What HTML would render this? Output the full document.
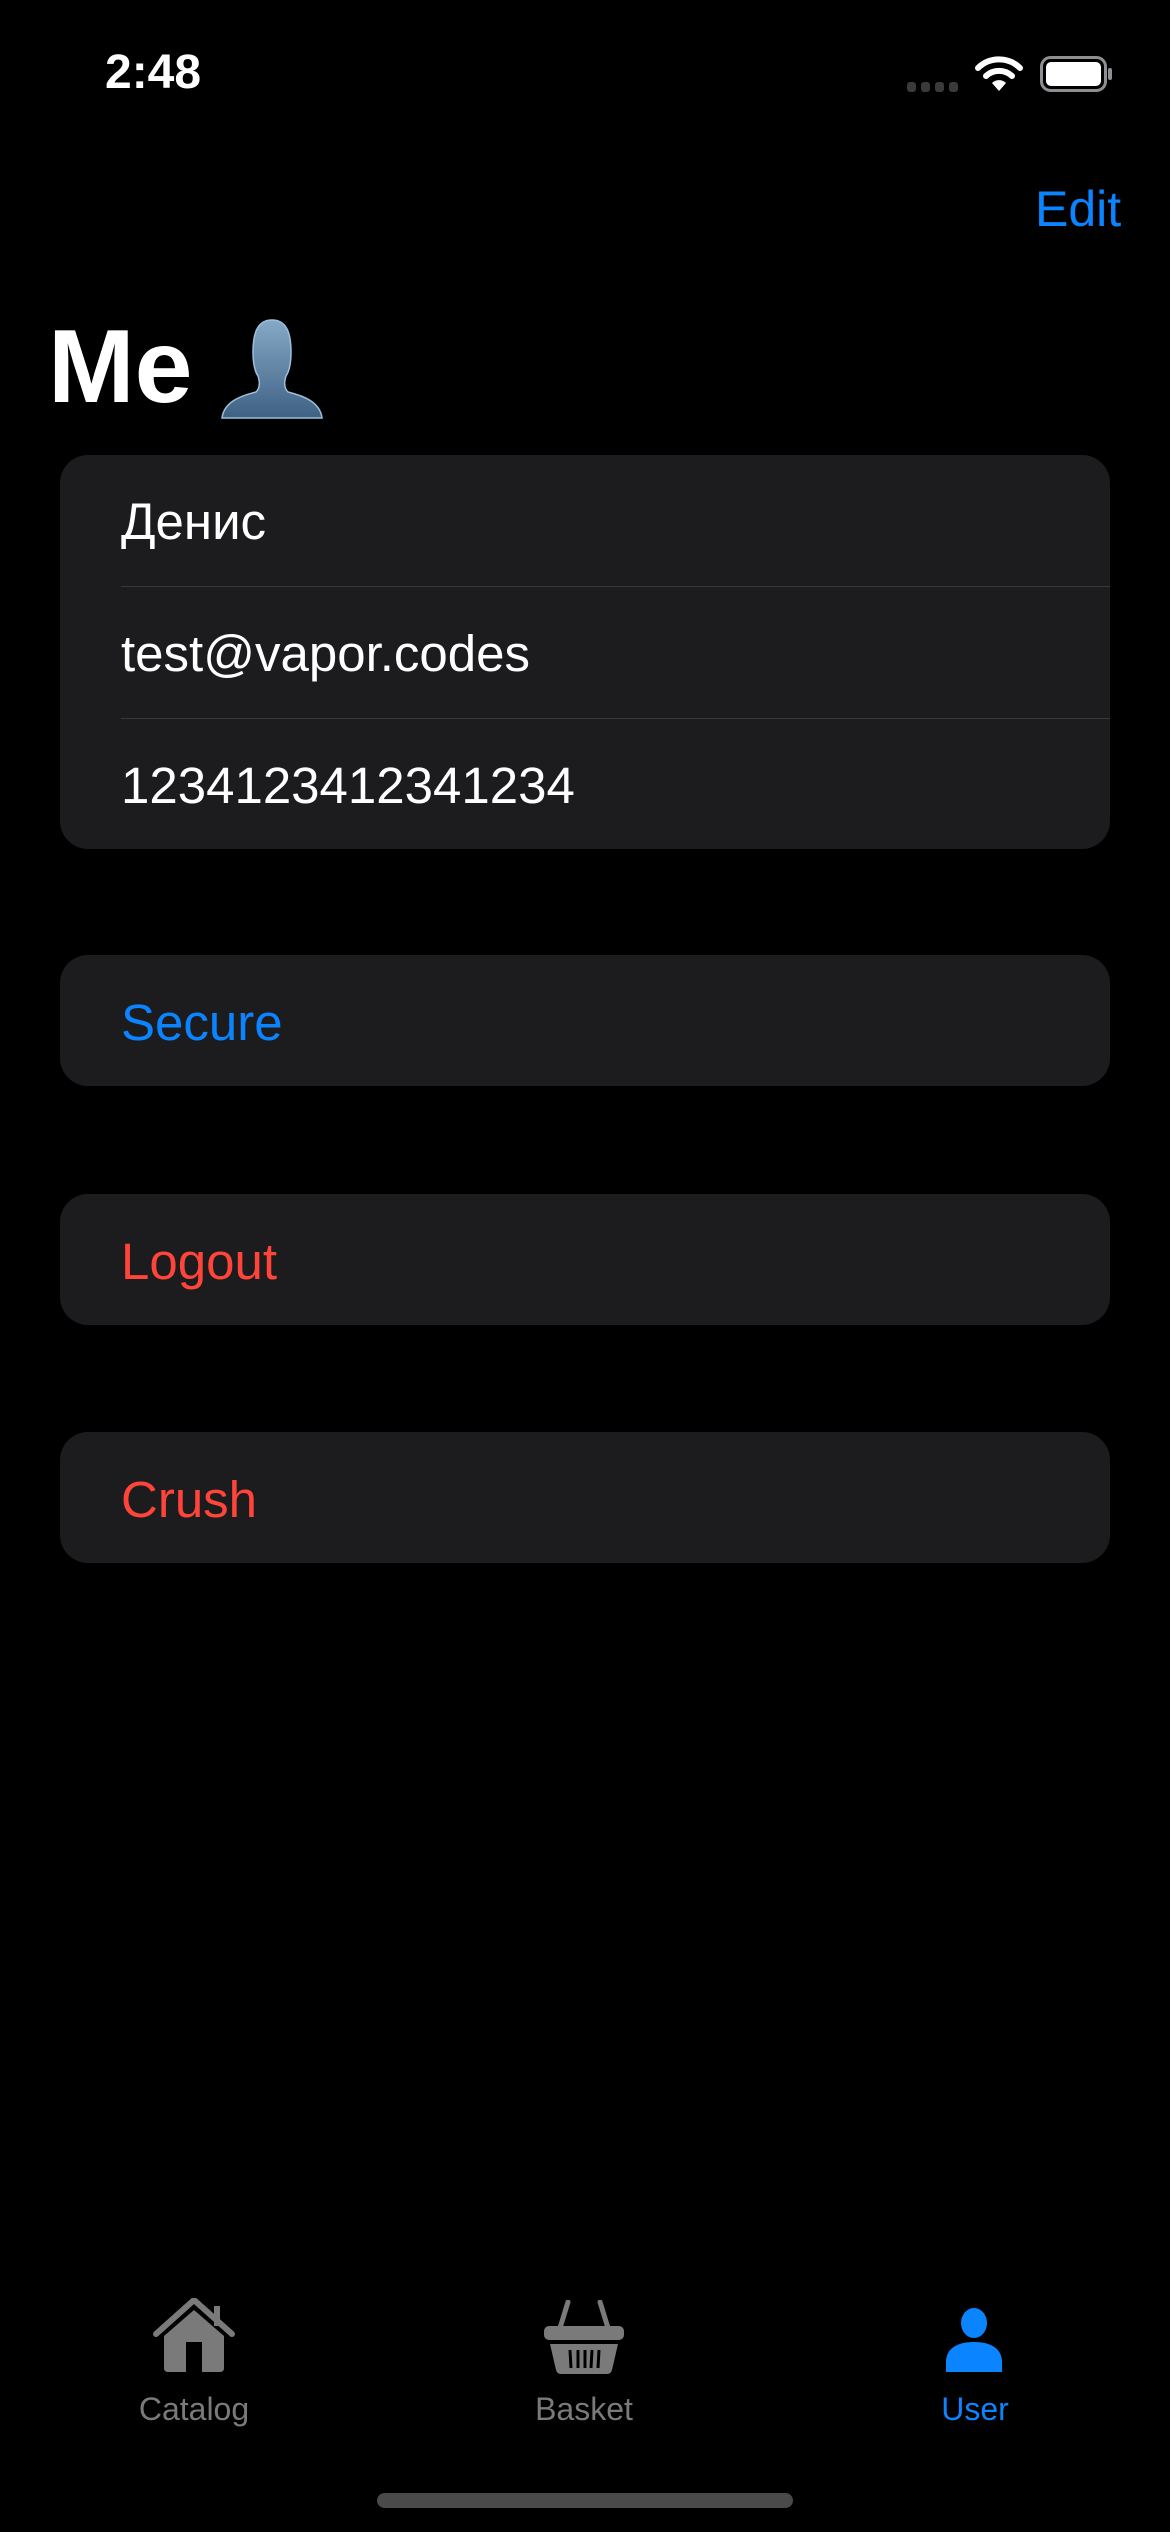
<!DOCTYPE html>
<html><head><meta charset="utf-8"><style>
*{margin:0;padding:0;box-sizing:border-box}
body{width:1170px;height:2532px;background:#000;font-family:"Liberation Sans","DejaVu Sans",sans-serif;position:relative;overflow:hidden;color:#fff}
.abs{position:absolute}
.card{position:absolute;left:60px;width:1050px;background:#1c1c1e;border-radius:28px}
.row{height:132px;line-height:134px;padding-left:61px;font-size:51px;position:relative}
.sep{position:absolute;left:61px;right:0;bottom:0;height:1px;background:#38383a}
.tab{position:absolute;font-size:32px;color:#7a7a7a;text-align:center;width:200px;top:2391px}
</style></head><body>
<div class="abs" style="left:105px;top:45px;font-size:48px;font-weight:bold">2:48</div>
<div class="abs" style="left:907px;top:80px">
<svg width="52" height="12"><g fill="#3a3a3c"><rect x="0" y="1" width="9" height="10" rx="3"/><rect x="14" y="1" width="9" height="10" rx="3"/><rect x="28" y="1" width="9" height="10" rx="3"/><rect x="42" y="1" width="9" height="10" rx="3"/></g></svg></div>
<svg class="abs" style="left:974px;top:54px" width="50" height="38" viewBox="0 0 50 38"><g fill="none" stroke="#fff" stroke-width="6" stroke-linecap="round"><path d="M4 14 A30 30 0 0 1 46 14"/><path d="M12 22 A19 19 0 0 1 38 22"/></g><path d="M18 29 A10 10 0 0 1 32 29 L25 37 Z" fill="#fff"/></svg>
<svg class="abs" style="left:1040px;top:56px" width="74" height="36"><rect x="1.5" y="1.5" width="64" height="33" rx="9" fill="none" stroke="#8e8e93" stroke-width="3"/><rect x="6" y="6" width="55" height="24" rx="5" fill="#fff"/><rect x="68" y="12" width="4" height="12" rx="2" fill="#8e8e93"/></svg>
<div class="abs" style="left:1035px;top:180px;font-size:50px;color:#0a84ff">Edit</div>
<div class="abs" style="left:48px;top:308px;font-size:104px;font-weight:bold">Me</div>
<svg class="abs" style="left:220px;top:318px" width="104" height="102" viewBox="0 0 104 102"><defs><linearGradient id="g" x1="0" y1="0" x2="0" y2="1"><stop offset="0" stop-color="#86a9c7"/><stop offset="1" stop-color="#3f6184"/></linearGradient></defs><path d="M52 2 C38 2 33 14 33 34 C33 44 34 52 38 58 C40 64 40 70 36 74 C20 78 4 84 2 100 L102 100 C100 84 84 78 68 74 C64 70 64 64 66 58 C70 52 71 44 71 34 C71 14 66 2 52 2 Z" fill="url(#g)" stroke="#9cc0dc" stroke-width="1.5"/></svg>
<div class="card" style="top:455px;height:394px">
<div class="row">Денис<div class="sep"></div></div>
<div class="row">test@vapor.codes<div class="sep"></div></div>
<div class="row">1234123412341234</div>
</div>
<div class="card" style="top:955px;height:131px"><div class="row" style="color:#0a84ff;height:131px;line-height:136px">Secure</div></div>
<div class="card" style="top:1194px;height:131px"><div class="row" style="color:#ff453a;height:131px;line-height:136px">Logout</div></div>
<div class="card" style="top:1432px;height:131px"><div class="row" style="color:#ff453a;height:131px;line-height:136px">Crush</div></div>
<svg class="abs" style="left:152px;top:2298px" width="84" height="76" viewBox="0 0 84 76"><path d="M4 36 L42 2 L80 36" fill="none" stroke="#7a7a7a" stroke-width="6" stroke-linejoin="round" stroke-linecap="round"/><rect x="62" y="8" width="6" height="20" fill="#7a7a7a"/><path d="M12 38 L42 12 L72 38 L72 70 Q72 74 68 74 L16 74 Q12 74 12 70 Z" fill="#7a7a7a"/><rect x="34" y="44" width="16" height="30" fill="#000"/></svg>
<svg class="abs" style="left:542px;top:2300px" width="84" height="76" viewBox="0 0 84 76"><path d="M26 2 L18 28 M58 2 L66 28" stroke="#7a7a7a" stroke-width="5" stroke-linecap="round"/><rect x="2" y="26" width="80" height="14" rx="5" fill="#7a7a7a"/><path d="M8 44 L76 44 L70 70 Q69 74 65 74 L19 74 Q15 74 14 70 Z" fill="#7a7a7a"/><g stroke="#000" stroke-width="3"><path d="M28 50 L29 68 M36 50 L36 68 M43 50 L43 68 M50 50 L49 68 M57 50 L56 68"/></g></svg>
<svg class="abs" style="left:944px;top:2308px" width="60" height="64" viewBox="0 0 60 64"><ellipse cx="30" cy="15" rx="13" ry="15" fill="#0a84ff"/><path d="M2 64 L2 54 C2 40 14 34 30 34 C46 34 58 40 58 54 L58 64 Z" fill="#0a84ff"/></svg>
<div class="tab" style="left:94px">Catalog</div>
<div class="tab" style="left:484px">Basket</div>
<div class="tab" style="left:875px;color:#0a84ff">User</div>
<div class="abs" style="left:377px;top:2493px;width:416px;height:15px;border-radius:8px;background:#4a4a4a"></div>
</body></html>
